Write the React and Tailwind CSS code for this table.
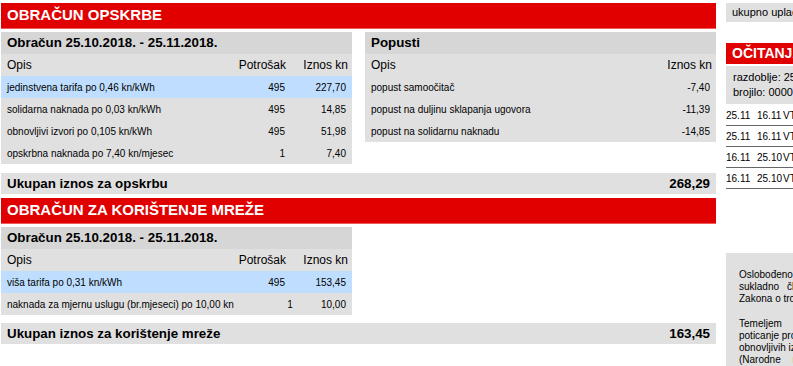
import React from "react";

const supplyRows = [
  { opis: "jedinstvena tarifa po 0,46 kn/kWh", kol: "495", iznos: "227,70", hl: true },
  { opis: "solidarna naknada po 0,03 kn/kWh", kol: "495", iznos: "14,85" },
  { opis: "obnovljivi izvori po 0,105 kn/kWh", kol: "495", iznos: "51,98" },
  { opis: "opskrbna naknada po 7,40 kn/mjesec", kol: "1", iznos: "7,40" },
];

const discountRows = [
  { opis: "popust samoočitač", iznos: "-7,40" },
  { opis: "popust na duljinu sklapanja ugovora", iznos: "-11,39" },
  { opis: "popust na solidarnu naknadu", iznos: "-14,85" },
];

const networkRows = [
  { opis: "viša tarifa po 0,31 kn/kWh", kol: "495", iznos: "153,45", hl: true },
  { opis: "naknada za mjernu uslugu (br.mjeseci) po 10,00 kn", kol: "1", iznos: "10,00" },
];

const readings = [
  ["25.11", "16.11", "VT"],
  ["25.11", "16.11", "VT"],
  ["16.11", "25.10", "VT"],
  ["16.11", "25.10", "VT"],
];

const RedHeader = ({ children }) => (
  <div className="h-[26px] bg-[#e00000] border-b border-[#ef5a5a] flex items-center px-[6px] text-white font-bold text-[15px]">
    {children}
  </div>
);

const TotalBar = ({ label, value }) => (
  <div className="h-[21px] bg-[#e0e0e0] flex items-center justify-between pl-[6px] pr-[6px] font-bold text-[13.33px]">
    <span>{label}</span>
    <span>{value}</span>
  </div>
);

// table with Opis / Potrošak / Iznos kn columns
const CalcTable = ({ rows }) => (
  <div className="w-[351px] bg-[#e0e0e0]">
    <div className="h-[22px] bg-[#d6d6d6] flex items-center px-[6px] font-bold text-[13.33px]">
      Obračun 25.10.2018. - 25.11.2018.
    </div>
    <div className="h-[22px] flex items-center text-[12px]">
      <span className="flex-1 pl-[6px]">Opis</span>
      <span className="w-[70px] text-right pr-[1px]">Potrošak</span>
      <span className="w-[63px] text-right pr-[2px] mr-[2px]">Iznos kn</span>
    </div>
    {rows.map((r) => (
      <div
        key={r.opis}
        className={`h-[22px] flex items-center text-[10px] ${r.hl ? "bg-[#bfdeff]" : ""}`}
      >
        <span className="flex-1 pl-[6px] whitespace-nowrap">{r.opis}</span>
        <span className="w-[70px] text-right pr-[2px]">{r.kol}</span>
        <span className="w-[63px] text-right pr-[4px] mr-[2px]">{r.iznos}</span>
      </div>
    ))}
  </div>
);

const DiscountTable = () => (
  <div className="w-[351px] bg-[#e0e0e0]">
    <div className="h-[22px] bg-[#d6d6d6] flex items-center px-[6px] font-bold text-[13.33px]">
      Popusti
    </div>
    <div className="h-[22px] flex items-center justify-between pl-[6px] pr-[4px] text-[12px]">
      <span>Opis</span>
      <span>Iznos kn</span>
    </div>
    {discountRows.map((r) => (
      <div key={r.opis} className="h-[22px] flex items-center justify-between pl-[6px] pr-[6px] text-[10px]">
        <span>{r.opis}</span>
        <span>{r.iznos}</span>
      </div>
    ))}
  </div>
);

// one justified line of the note text
const J = ({ children }) => (
  <div className="whitespace-nowrap text-justify [text-align-last:justify]">{children}</div>
);

export default function App() {
  return (
    <div className="w-[793px] h-[366px] overflow-hidden bg-white flex text-black font-['Liberation_Sans',Arial,sans-serif]">
      {/* Left column */}
      <div className="ml-[1px] mt-[3px] w-[715px] shrink-0 flex flex-col">
        <RedHeader>OBRAČUN OPSKRBE</RedHeader>
        <div className="mt-[3px] flex justify-between items-start">
          <CalcTable rows={supplyRows} />
          <DiscountTable />
        </div>
        <div className="mt-[9px]">
          <TotalBar label="Ukupan iznos za opskrbu" value="268,29" />
        </div>
        <div className="mt-[4px]">
          <RedHeader>OBRAČUN ZA KORIŠTENJE MREŽE</RedHeader>
        </div>
        <div className="mt-[3px]">
          <CalcTable rows={networkRows} />
        </div>
        <div className="mt-[8px]">
          <TotalBar label="Ukupan iznos za korištenje mreže" value="163,45" />
        </div>
      </div>

      {/* Right column */}
      <div className="ml-[10px] mt-[3px] w-[200px] shrink-0 flex flex-col">
        <div className="h-[19px] bg-[#e0e0e0] flex items-center px-[6px] text-[11px] whitespace-nowrap">
          ukupno uplaćeno: 0,00
        </div>
        <div className="mt-[21px] h-[21px] bg-[#e00000] flex items-center px-[6px] text-white font-bold text-[14px] whitespace-nowrap">
          OČITANJA BROJILA
        </div>
        <div className="mt-[2px] h-[39px] bg-[#e0e0e0] flex flex-col justify-center pl-[7px] text-[11px] leading-[15px] whitespace-nowrap">
          <div>razdoblje: 25.10.2018. - 25.11.2018.</div>
          <div>brojilo: 00000123456</div>
        </div>
        <div className="mt-[1px]">
          {readings.map((r, i) => (
            <div key={i} className="h-[21px] flex items-center border-b border-[#666] text-[10px] whitespace-nowrap">
              <span className="w-[31px]">{r[0]}</span>
              <span className="w-[26px]">{r[1]}</span>
              <span>{r[2]}</span>
            </div>
          ))}
        </div>
        <div className="mt-[64px] flex-1 bg-[#e0e0e0] pt-[16px] pl-[13px] text-[10px] leading-[12px]">
          <div className="w-[152px] mb-[13px]">
            <J>Oslobođeno plaćanja naknade za</J>
            <J>sukladno članku 29. stavku 6.</J>
            <div className="whitespace-nowrap">Zakona o trošarinama.</div>
          </div>
          <div className="w-[152px]">
            <J>Temeljem Uredbe o naknadi</J>
            <J>poticanje proizvodnje električne energije</J>
            <J>obnovljivih izvora energije i kogeneracije</J>
            <J>(Narodne novine broj 33/15)</J>
          </div>
        </div>
      </div>
    </div>
  );
}
